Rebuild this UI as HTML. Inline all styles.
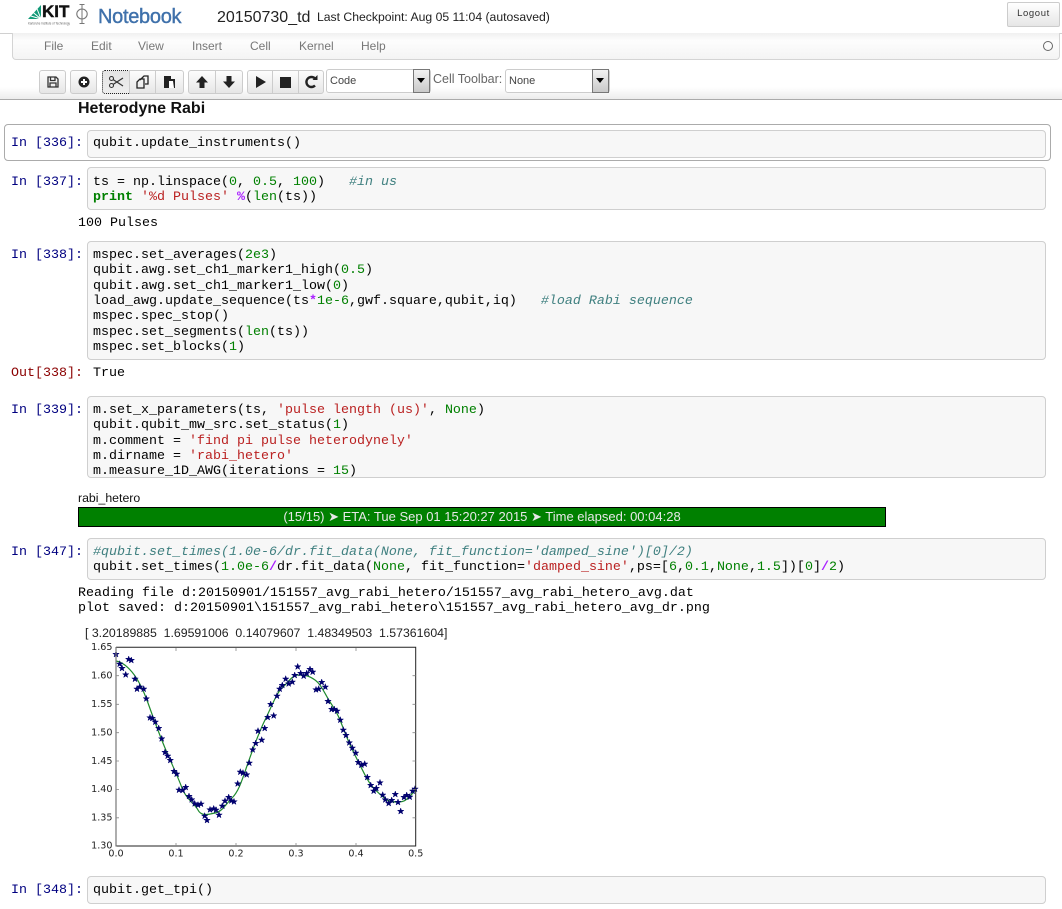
<!DOCTYPE html>
<html><head><meta charset="utf-8"><title>20150730_td</title>
<style>
html,body{margin:0;padding:0;background:#fff;}
body{width:1062px;height:909px;position:relative;overflow:hidden;font-family:"Liberation Sans",sans-serif;color:#000;}
.a{position:absolute;white-space:nowrap;}
pre{position:absolute;margin:0;font-family:"Liberation Mono",monospace;font-size:13.33px;line-height:15.36px;color:#000;white-space:pre;}
.box{position:absolute;left:87px;width:957px;background:#f7f7f7;border:1px solid #cfcfcf;border-radius:4px;box-sizing:content-box;}
.pi{position:absolute;left:11px;font-family:"Liberation Mono",monospace;font-size:13.33px;line-height:15px;color:#000080;white-space:pre;}
.po{color:#8b0000;left:11px;}
.k{color:#008000;font-weight:bold}.n{color:#008000}.s{color:#ba2121}.c{color:#408080;font-style:italic}.o{color:#aa22ff;font-weight:bold}
.btn{position:absolute;top:70px;height:22px;background:linear-gradient(#fdfdfd,#e6e6e6);border:1px solid #ccc;box-sizing:content-box;}
.btn svg{position:absolute;left:0;top:0;}
.menu{position:absolute;top:39px;font-size:12px;color:#777;line-height:14px;}
.sel{position:absolute;top:69px;height:22px;background:#fff;border:1px solid #ccc;border-radius:3px;font-size:11px;color:#444;line-height:23px;padding-left:3px;box-sizing:content-box;}
.arr{position:absolute;top:69px;width:15px;height:22px;background:linear-gradient(#f2f2f2,#c9c9c9);border:1px solid #777;}
.arr i{position:absolute;left:3px;top:8px;width:0;height:0;border-left:4.5px solid transparent;border-right:4.5px solid transparent;border-top:5px solid #000;}
.t{font:9.6px "DejaVu Sans",sans-serif;fill:#222;}
</style></head><body>

<!-- Header -->
<svg class="a" style="left:24px;top:3px" width="52" height="24" viewBox="0 0 52 24">
<path d="M4 16 L17 16 L17 2 Z" fill="#129a78"/>
<path d="M17 16 L5 12.5 M17 16 L8 8.5 M17 16 L12.5 4.5" stroke="#fff" stroke-width="1"/>
<text x="4" y="21.5" font-family="Liberation Sans" font-size="3.6" fill="#666" textLength="42" lengthAdjust="spacingAndGlyphs">Karlsruhe Institute of Technology</text>
</svg>
<div class="a" style="left:42px;top:2px;font-size:17px;font-weight:bold;line-height:20px;color:#111;-webkit-text-stroke:.4px #111">KIT</div>
<svg class="a" style="left:73px;top:3px" width="18" height="22" viewBox="0 0 18 22"><ellipse cx="9" cy="11" rx="5.2" ry="5" fill="none" stroke="#777" stroke-width="1.1"/><path d="M9 1V21M6.5 1.5H11.5M6.5 20.5H11.5" stroke="#777" stroke-width="1" fill="none"/></svg>
<div class="a" style="left:98px;top:5px;font-size:20px;line-height:24px;color:#3f71ab;-webkit-text-stroke:.4px #3f71ab;letter-spacing:-.3px">Notebook</div>
<div class="a" style="left:217px;top:7px;font-size:16px;line-height:22px;color:#222">20150730_td</div>
<div class="a" style="left:317px;top:10px;font-size:12.2px;line-height:15px;color:#222">Last Checkpoint: Aug 05 11:04 (autosaved)</div>
<div class="a" style="left:1007px;top:2px;width:51px;height:23px;border:1px solid #ccc;border-radius:2px;background:linear-gradient(#fff,#e6e6e6);font-size:9.5px;letter-spacing:.6px;text-align:center;line-height:22px;color:#333">Logout</div>

<!-- Menubar -->
<div class="a" style="left:0;top:33px;width:1062px;height:1px;background:#d0d0d0"></div>
<div class="a" style="left:12px;top:33px;width:1046px;height:26px;border:1px solid #d4d4d4;border-top:0;border-radius:0 0 4px 4px;background:linear-gradient(#f0f0f0,#fdfdfd 30%,#f4f4f4)"></div>
<div class="menu" style="left:44px">File</div>
<div class="menu" style="left:91px">Edit</div>
<div class="menu" style="left:138px">View</div>
<div class="menu" style="left:192px">Insert</div>
<div class="menu" style="left:250px">Cell</div>
<div class="menu" style="left:299px">Kernel</div>
<div class="menu" style="left:361px">Help</div>
<div class="a" style="left:1043px;top:41px;width:8px;height:8px;border:1.5px solid #666;border-radius:50%"></div>

<!-- Toolbar -->
<div class="a" style="left:0;top:60px;width:1062px;height:39px;background:linear-gradient(#fff 70%,#ececec);border-bottom:1px solid #aaa"></div>

<div class="btn" style="left:39px;width:25px;border-radius:3px"><svg width="25" height="22"><path d="M8 6H16L18 8V16H8Z M10.5 6V9.5H15V6 M10 16V12H16V16" fill="none" stroke="#333" stroke-width="1.3"/></svg></div>
<div class="btn" style="left:70px;width:25px;border-radius:3px"><svg width="25" height="22"><circle cx="13" cy="11" r="5.5" fill="#222"/><path d="M10 11H16M13 8V14" stroke="#fff" stroke-width="2"/></svg></div>
<div class="btn" style="left:102px;width:26px;border:1px dotted #222;border-radius:3px 0 0 3px;background:linear-gradient(#e4e4e4,#ededed)"><svg width="26" height="22"><circle cx="8.5" cy="7.5" r="2" fill="none" stroke="#333" stroke-width="1.1"/><circle cx="8.5" cy="14.5" r="2" fill="none" stroke="#333" stroke-width="1.1"/><path d="M10 8.5L20 15M10 13.5L20 7" stroke="#333" stroke-width="1.2"/></svg></div>
<div class="btn" style="left:129px;width:25px"><svg width="25" height="22"><path d="M10 9L14 5H18V13H15M7 11L10 8H14V17H7Z" fill="none" stroke="#222" stroke-width="1.3"/></svg></div>
<div class="btn" style="left:155px;width:27px;border-radius:0 3px 3px 0"><svg width="27" height="22"><path d="M8 5H15V8H19V17H8Z" fill="#222"/><path d="M13 10H17L18 17H13Z" fill="#fff"/></svg></div>
<div class="btn" style="left:188px;width:26px;border-radius:3px 0 0 3px"><svg width="26" height="22"><path d="M13 5L19 11.5H15.5V17H10.5V11.5H7Z" fill="#222"/></svg></div>
<div class="btn" style="left:215px;width:26px;border-radius:0 3px 3px 0"><svg width="26" height="22"><path d="M13 17L19 10.5H15.5V5H10.5V10.5H7Z" fill="#222"/></svg></div>
<div class="btn" style="left:247px;width:24px;border-radius:3px 0 0 3px"><svg width="24" height="22"><path d="M8 5L18 11L8 17Z" fill="#222"/></svg></div>
<div class="btn" style="left:272px;width:25px"><svg width="25" height="22"><rect x="7" y="6" width="11" height="11" fill="#222"/></svg></div>
<div class="btn" style="left:298px;width:24px;border-radius:0 3px 3px 0"><svg width="24" height="22"><path d="M16 14.5A5 5 0 1 1 16 7.5" fill="none" stroke="#222" stroke-width="2.4"/><path d="M13.5 9H18.5V4Z" fill="#222"/></svg></div>

<div class="sel" style="left:326px;width:100px">Code</div>
<div class="arr" style="left:413px"><i></i></div>
<div class="a" style="left:433px;top:72px;font-size:12.5px;line-height:14px;color:#666">Cell Toolbar:</div>
<div class="sel" style="left:505px;width:100px">None</div>
<div class="arr" style="left:592px"><i></i></div>

<!-- Heading -->
<div class="a" style="left:78px;top:99px;font-size:16px;font-weight:bold;line-height:19px;color:#111">Heterodyne Rabi</div>

<!-- 336 -->
<div class="a" style="left:4px;top:124px;width:1045px;height:35px;border:1px solid #ababab;border-radius:4px"></div>
<div class="box" style="top:130px;height:26px"></div>
<div class="pi" style="top:136px">In [336]:</div>
<pre style="left:93px;top:136px">qubit.update_instruments()</pre>

<!-- 337 -->
<div class="box" style="top:167px;height:41px"></div>
<div class="pi" style="top:175px">In [337]:</div>
<pre style="left:93px;top:175px">ts = np.linspace(<span class="n">0</span>, <span class="n">0.5</span>, <span class="n">100</span>)   <span class="c">#in us</span>
<span class="k">print</span> <span class="s">'%d Pulses'</span> <span class="o">%</span>(<span class="n">len</span>(ts))</pre>
<pre style="left:78px;top:216px">100 Pulses</pre>

<!-- 338 -->
<div class="box" style="top:241px;height:117px"></div>
<div class="pi" style="top:248px">In [338]:</div>
<pre style="left:93px;top:248px">mspec.set_averages(<span class="n">2e3</span>)
qubit.awg.set_ch1_marker1_high(<span class="n">0.5</span>)
qubit.awg.set_ch1_marker1_low(<span class="n">0</span>)
load_awg.update_sequence(ts<span class="o">*</span><span class="n">1e-6</span>,gwf.square,qubit,iq)   <span class="c">#load Rabi sequence</span>
mspec.spec_stop()
mspec.set_segments(<span class="n">len</span>(ts))
mspec.set_blocks(<span class="n">1</span>)</pre>
<div class="pi po" style="top:366px">Out[338]:</div>
<pre style="left:93px;top:366px">True</pre>

<!-- 339 -->
<div class="box" style="top:396px;height:80px"></div>
<div class="pi" style="top:403px">In [339]:</div>
<pre style="left:93px;top:403px">m.set_x_parameters(ts, <span class="s">'pulse length (us)'</span>, <span class="n">None</span>)
qubit.qubit_mw_src.set_status(<span class="n">1</span>)
m.comment = <span class="s">'find pi pulse heterodynely'</span>
m.dirname = <span class="s">'rabi_hetero'</span>
m.measure_1D_AWG(iterations = <span class="n">15</span>)</pre>

<div class="a" style="left:78px;top:491px;font-size:12.3px;line-height:15px;color:#111">rabi_hetero</div>
<div class="a" style="left:78px;top:507px;width:806px;height:18px;background:#008000;border:1px solid #000;color:#e8e8e8;font-size:13px;line-height:18px;text-align:center">(15/15) ➤ ETA: Tue Sep 01 15:20:27 2015 ➤ Time elapsed: 00:04:28</div>

<!-- 347 -->
<div class="box" style="top:538px;height:40px"></div>
<div class="pi" style="top:545px">In [347]:</div>
<pre style="left:93px;top:545px"><span class="c">#qubit.set_times(1.0e-6/dr.fit_data(None, fit_function='damped_sine')[0]/2)</span>
qubit.set_times(<span class="n">1.0e-6</span><span class="o">/</span>dr.fit_data(<span class="n">None</span>, fit_function=<span class="s">'damped_sine'</span>,ps=[<span class="n">6</span>,<span class="n">0.1</span>,<span class="n">None</span>,<span class="n">1.5</span>])[<span class="n">0</span>]<span class="o">/</span><span class="n">2</span>)</pre>
<pre style="left:78px;top:586px">Reading file d:20150901/151557_avg_rabi_hetero/151557_avg_rabi_hetero_avg.dat
plot saved: d:20150901\151557_avg_rabi_hetero\151557_avg_rabi_hetero_avg_dr.png</pre>
<div class="a" style="left:85px;top:626px;font-size:12.3px;line-height:15px;color:#222;white-space:pre">[ 3.20189885  1.69591006  0.14079607  1.48349503  1.57361604]</div>

<!-- Plot -->
<svg class="a" style="left:70px;top:620px" width="360" height="250" viewBox="0 0 360 250">
<defs><polygon id="st" points="0,-3.3 .8,-1 3.2,-1 1.3,.4 2,2.7 0,1.3 -2,2.7 -1.3,.4 -3.2,-1 -.8,-1" fill="#00006e" stroke="#00006e" stroke-width=".5"/></defs>
<path d="M46 41C52 42 57 46 62 52S73 69 78 83S90 116 95 128S108 157 112 168S125 184 128 190S137 195 145 193S155 185 162 178S172 160 178 143S190 110 195 100S207 72 212 68S222 55 228 55S238 55 245 60S255 75 262 85S272 106 278 120S290 145 295 155S305 170 312 176S320 182 328 182S338 178 345.7 170" fill="none" stroke="#1f8a2e" stroke-width="1.2"/>
<g id="pts">
<use href="#st" x="46" y="34.3"/><use href="#st" x="49.7" y="44"/><use href="#st" x="52" y="48.3"/><use href="#st" x="55.7" y="54.7"/><use href="#st" x="58.7" y="39.3"/><use href="#st" x="61.3" y="40.3"/><use href="#st" x="65" y="59"/><use href="#st" x="67" y="69"/><use href="#st" x="69.7" y="67"/><use href="#st" x="73.7" y="69"/><use href="#st" x="76.3" y="78.7"/><use href="#st" x="80" y="97.7"/><use href="#st" x="82.3" y="98.3"/><use href="#st" x="85.3" y="102"/><use href="#st" x="88.7" y="108.3"/><use href="#st" x="91.7" y="118.7"/><use href="#st" x="95" y="132.3"/><use href="#st" x="97.7" y="136"/><use href="#st" x="100.3" y="140.3"/><use href="#st" x="104" y="151.3"/><use href="#st" x="106.7" y="154"/><use href="#st" x="109" y="170"/><use href="#st" x="112.7" y="170.3"/><use href="#st" x="115.7" y="167.3"/><use href="#st" x="119" y="176.3"/><use href="#st" x="121.7" y="179.7"/><use href="#st" x="124.7" y="183.7"/><use href="#st" x="128" y="185"/><use href="#st" x="131" y="184"/><use href="#st" x="134.7" y="196"/><use href="#st" x="137" y="200.3"/><use href="#st" x="140" y="189.7"/><use href="#st" x="143.7" y="188.7"/><use href="#st" x="146" y="190"/><use href="#st" x="149" y="195"/><use href="#st" x="152.3" y="186"/><use href="#st" x="155" y="181"/><use href="#st" x="158.7" y="177.3"/><use href="#st" x="161.3" y="180.7"/><use href="#st" x="164" y="181.7"/><use href="#st" x="167.7" y="163.7"/><use href="#st" x="170.3" y="152"/><use href="#st" x="173" y="153"/><use href="#st" x="176.7" y="154.7"/><use href="#st" x="179.3" y="143"/><use href="#st" x="182.7" y="129.7"/><use href="#st" x="185.7" y="123.3"/><use href="#st" x="188" y="111"/><use href="#st" x="191.7" y="120"/><use href="#st" x="194.7" y="108.3"/><use href="#st" x="197.7" y="97.3"/><use href="#st" x="200.7" y="84.3"/><use href="#st" x="203.7" y="95.7"/><use href="#st" x="207" y="76"/><use href="#st" x="209.7" y="69"/><use href="#st" x="212.3" y="65.3"/><use href="#st" x="215.7" y="59"/><use href="#st" x="218.7" y="63.7"/><use href="#st" x="222.3" y="62"/><use href="#st" x="224.7" y="55.3"/><use href="#st" x="227.7" y="46.7"/><use href="#st" x="230.7" y="53.3"/><use href="#st" x="233.7" y="56"/><use href="#st" x="236.7" y="53.3"/><use href="#st" x="240" y="49.3"/><use href="#st" x="242.7" y="52"/><use href="#st" x="246" y="69.7"/><use href="#st" x="248.7" y="69"/><use href="#st" x="251.7" y="62.3"/><use href="#st" x="255.3" y="67"/><use href="#st" x="258" y="81.3"/><use href="#st" x="261.7" y="89.3"/><use href="#st" x="264.3" y="89.3"/><use href="#st" x="267" y="91"/><use href="#st" x="270.3" y="100"/><use href="#st" x="273.3" y="110"/><use href="#st" x="276" y="115.3"/><use href="#st" x="279.3" y="122.7"/><use href="#st" x="282.3" y="128"/><use href="#st" x="285.7" y="133"/><use href="#st" x="288.3" y="142.3"/><use href="#st" x="291.3" y="145"/><use href="#st" x="294.7" y="144"/><use href="#st" x="297.3" y="157.3"/><use href="#st" x="300.7" y="165.3"/><use href="#st" x="303.7" y="171"/><use href="#st" x="306.3" y="168.3"/><use href="#st" x="310" y="162.7"/><use href="#st" x="312.7" y="175"/><use href="#st" x="315.3" y="179.7"/><use href="#st" x="318.7" y="183.3"/><use href="#st" x="321.7" y="180.3"/><use href="#st" x="325.3" y="174.3"/><use href="#st" x="328" y="182.3"/><use href="#st" x="330.7" y="191.3"/><use href="#st" x="334" y="177.3"/><use href="#st" x="336.7" y="175.3"/><use href="#st" x="339.7" y="177"/><use href="#st" x="342.7" y="171"/><use href="#st" x="345" y="169"/>
</g>
<path d="M46 27.3H345.7V226H46" fill="none" stroke="#222" stroke-width="1"/>
<path d="M46 27V226.5" stroke="#777" stroke-width="1.2"/>
<path d="M46 55.7H49M46 84.3H49M46 112.7H49M46 141H49M46 169.5H49M46 197.8H49M342.5 55.7H345.7M342.5 84.3H345.7M342.5 112.7H345.7M342.5 141H345.7M342.5 169.5H345.7M342.5 197.8H345.7M106 226V223M166 226V223M226 226V223M286 226V223M106 28V31M166 28V31M226 28V31M286 28V31" stroke="#888" stroke-width=".8"/>
<g class="t" text-anchor="end">
<text x="42.5" y="30">1.65</text><text x="42.5" y="58.4">1.60</text><text x="42.5" y="87">1.55</text><text x="42.5" y="115.4">1.50</text><text x="42.5" y="143.8">1.45</text><text x="42.5" y="172.2">1.40</text><text x="42.5" y="200.4">1.35</text><text x="42.5" y="228.7">1.30</text>
</g>
<g class="t" text-anchor="middle">
<text x="46" y="236.7">0.0</text><text x="106" y="236.7">0.1</text><text x="166" y="236.7">0.2</text><text x="226" y="236.7">0.3</text><text x="286" y="236.7">0.4</text><text x="345.7" y="236.7">0.5</text>
</g>
</svg>

<!-- 348 -->
<div class="box" style="top:876px;height:26px"></div>
<div class="pi" style="top:883px">In [348]:</div>
<pre style="left:93px;top:883px">qubit.get_tpi()</pre>

</body></html>
